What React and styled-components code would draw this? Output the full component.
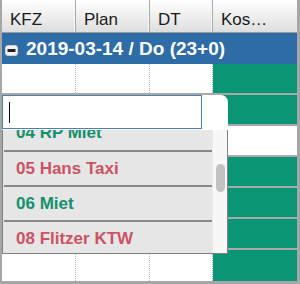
import React, { useLayoutEffect, useRef } from 'react'
import styled, { createGlobalStyle } from 'styled-components'

const GlobalStyle = createGlobalStyle`
  html, body { margin: 0; padding: 0; background: #fff; }
  body { font-family: "Liberation Sans", Arial, sans-serif; }
`

const columns = ['KFZ', 'Plan', 'DT', 'Kos…']
const rows = [true, true, false, true, true, true, true]
const vehicles = [
  { label: '04 RP Miet', tone: 'green' },
  { label: '05 Hans Taxi', tone: 'red' },
  { label: '06 Miet', tone: 'green' },
  { label: '08 Flitzer KTW', tone: 'red' },
]

const App = () => {
  const listRef = useRef(null)
  useLayoutEffect(() => {
    if (listRef.current) listRef.current.scrollTop = 15
  }, [])

  return (
    <>
      <GlobalStyle />
      <Frame>
        <Header>
          {columns.map((c) => (
            <HeadCell key={c}>{c}</HeadCell>
          ))}
        </Header>
        <GroupRow>
          <Toggle width="13" height="11" viewBox="0 0 13 11">
            <rect x="0.5" y="0.5" width="12" height="10" rx="2.5" fill="#f4f4f4" stroke="#d0d0d0" />
            <rect x="2.5" y="4" width="8" height="3" fill="#222" />
          </Toggle>
          2019-03-14 / Do (23+0)
        </GroupRow>
        {rows.map((busy, i) => (
          <Row key={i} $last={i === rows.length - 1}>
            <Cell />
            <Cell />
            <Cell />
            <Cost $busy={busy} />
          </Row>
        ))}

        <Popup>
          <InputBar>
            <SearchBox>
              <Caret />
            </SearchBox>
          </InputBar>
          <ListBox>
            <Viewport ref={listRef}>
              {vehicles.map((v, i) => (
                <Item key={v.label} $tone={v.tone} $first={i === 0}>
                  {v.label}
                </Item>
              ))}
            </Viewport>
            <Track>
              <Thumb />
            </Track>
          </ListBox>
        </Popup>
      </Frame>
    </>
  )
}

const Frame = styled.div`
  position: relative;
  width: 300px;
  height: 284px;
  box-sizing: border-box;
  border-left: 2px solid #a7a7a7;
  border-right: 3px solid #a7a7a7;
  border-bottom: 3px solid #a7a7a7;
  overflow: hidden;
`
const Header = styled.div`
  display: grid;
  grid-template-columns: 74px 74px 63px 84px;
  height: 32px;
  border-bottom: 1px solid #9c9c9c;
  background: linear-gradient(#ffffff, #f2f2f2 40%, #dedede);
`
const HeadCell = styled.div`
  box-sizing: border-box;
  padding: 10px 0 0 8px;
  font-size: 17px;
  line-height: 19px;
  color: #1a1a1a;
  border-right: 1px solid #ababab;
  box-shadow: inset -1px 0 0 #f6f6f6;
  white-space: nowrap;
  overflow: hidden;
  &:last-child { border-right: none; box-shadow: none; }
`
const GroupRow = styled.div`
  display: flex;
  align-items: center;
  gap: 8px;
  height: 31px;
  padding-left: 3px;
  background: #2d6ca7;
  color: #fff;
  font-size: 19px;
  font-weight: bold;
  white-space: nowrap;
`
const Toggle = styled.svg`
  flex: none;
  margin-top: 3px;
`
const Row = styled.div`
  display: grid;
  grid-template-columns: 74px 74px 63px 84px;
  height: 31px;
  box-sizing: border-box;
  border-bottom: ${(p) => (p.$last ? 'none' : '2px solid #a9a9a9')};
`
const Cell = styled.div`
  border-right: 1px dotted #b4b4b4;
`
const Cost = styled.div`
  background: ${(p) => (p.$busy ? '#0a9575' : '#fff')};
`
const Popup = styled.div`
  position: absolute;
  left: 0;
  top: 95px;
  width: 226px;
`
const InputBar = styled.div`
  height: 35px;
  background: #fff;
  border-top-right-radius: 7px;
`
const SearchBox = styled.div`
  width: 200px;
  height: 34px;
  box-sizing: border-box;
  border: 1px solid #4e80b8;
  display: flex;
  align-items: center;
  padding-left: 6px;
  background: #fff;
`
const Caret = styled.span`
  width: 1px;
  height: 21px;
  background: #000;
`
const ListBox = styled.div`
  display: flex;
  height: 124px;
  box-sizing: border-box;
  border-left: 1px solid #808080;
  border-right: 1px solid #808080;
  border-bottom: 1px solid #808080;
  background: #e6e6e6;
`
const Viewport = styled.div`
  flex: 1;
  overflow: hidden;
  padding-left: 1px;
`
const Item = styled.div`
  height: 35px;
  box-sizing: border-box;
  display: flex;
  align-items: center;
  padding-left: 12px;
  border-top: ${(p) => (p.$first ? 'none' : '2px solid #888')};
  font-size: 17px;
  font-weight: bold;
  color: ${(p) => (p.$tone === 'green' ? '#13906b' : '#cc5363')};
  white-space: nowrap;
`
const Track = styled.div`
  width: 14px;
  flex: none;
  background: #f7f7f7;
  border-left: 1px solid #ececec;
  padding-top: 34px;
  display: flex;
  justify-content: center;
`
const Thumb = styled.div`
  width: 9px;
  height: 28px;
  border-radius: 5px;
  background: #c2c2c2;
`

export default App
